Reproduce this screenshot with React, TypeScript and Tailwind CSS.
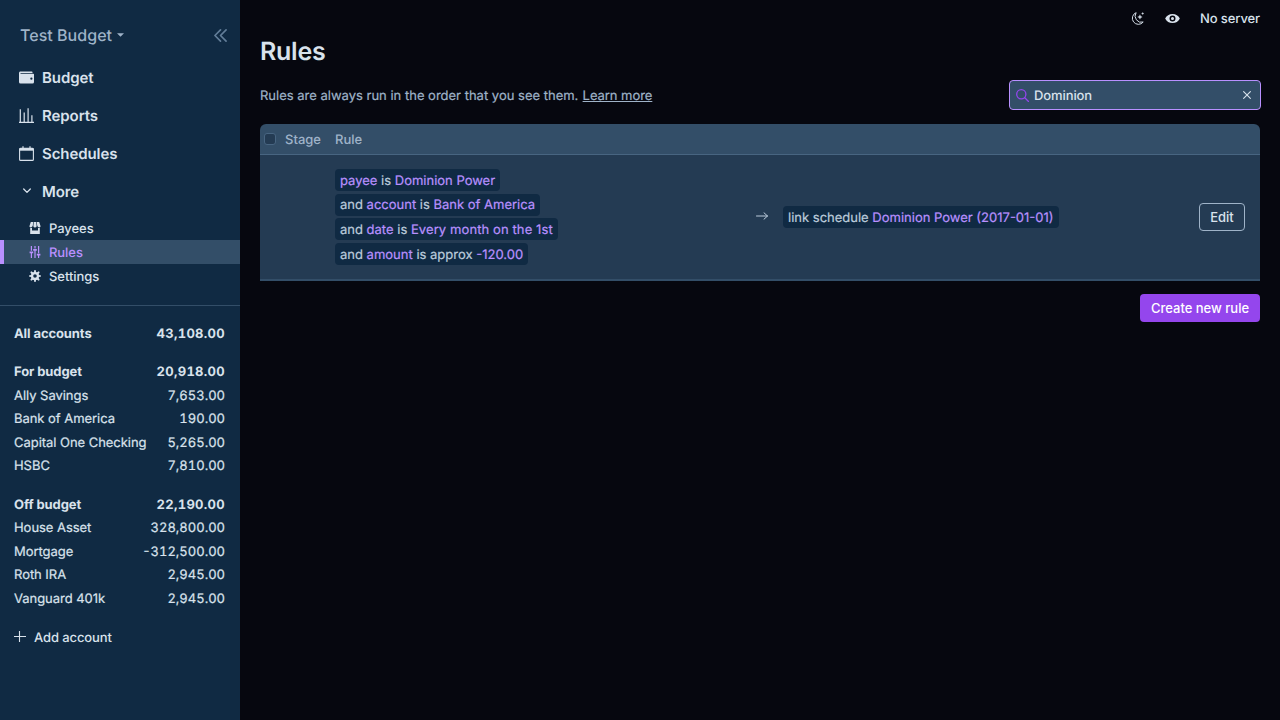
import type { ReactNode } from 'react';

const icons = {
  wallet:
    'M0 4c0-1.1.9-2 2-2h15a1 1 0 0 1 1 1v1H2v1h17a1 1 0 0 1 1 1v10a2 2 0 0 1-2 2H2a2 2 0 0 1-2-2V4zm16.5 9a1.5 1.5 0 1 0 0-3 1.5 1.5 0 0 0 0 3z',
  store:
    'M18 9.87V20H2V9.87a4.25 4.25 0 0 0 3-.38V14h10V9.5a4.26 4.26 0 0 0 3 .37zM3 0h4l-.67 6.03A3.43 3.43 0 0 1 3 9C1.34 9 .42 7.73.95 6.15L3 0zm5 0h4l.7 6.3c.17 1.5-.91 2.7-2.42 2.7h-.56A2.38 2.38 0 0 1 7.3 6.3L8 0zm5 0h4l2.05 6.15C19.58 7.73 18.65 9 17 9a3.42 3.42 0 0 1-3.33-2.97L13 0z',
  tuning:
    'M17 16v4h-2v-4h-2v-3h6v3h-2zM1 9h6v3H1V9zm6-4h6v3H7V5zM3 0h2v8H3V0zm12 0h2v12h-2V0zM9 0h2v4H9V0zM3 12h2v8H3v-8zm6-4h2v12H9V8z',
  cog: 'M3.94 6.5L2.22 3.64l1.42-1.42L6.5 3.94c.52-.3 1.1-.54 1.7-.7L9 0h2l.8 3.24c.6.16 1.18.4 1.7.7l2.86-1.72 1.42 1.42-1.72 2.86c.3.52.54 1.1.7 1.7L20 9v2l-3.24.8c-.16.6-.4 1.18-.7 1.7l1.72 2.86-1.42 1.42-2.86-1.72c-.52.3-1.1.54-1.7.7L11 20H9l-.8-3.24c-.6-.16-1.18-.4-1.7-.7l-2.86 1.72-1.42-1.42 1.72-2.86c-.3-.52-.54-1.1-.7-1.7L0 11V9l3.24-.8c.16-.6.4-1.18.7-1.7zM10 13a3 3 0 1 0 0-6 3 3 0 0 0 0 6z',
  eye: 'M.2 10a11 11 0 0 1 19.6 0A11 11 0 0 1 .2 10zm9.8 4a4 4 0 1 0 0-8 4 4 0 0 0 0 8zm0-2a2 2 0 1 1 0-4 2 2 0 0 1 0 4z',
};

function Glyph({ d, className }: { d: string; className: string }) {
  return (
    <svg viewBox="0 0 20 20" className={className} fill="currentColor">
      <path d={d} />
    </svg>
  );
}

function Primary({ icon, label }: { icon: ReactNode; label: string }) {
  return (
    <div className="flex h-[38px] items-center pl-[19px] text-[15px] font-semibold tracking-[-0.08px]">
      <span className="mr-2 flex w-[15px] justify-center">{icon}</span>
      <span className="pt-0.5">{label}</span>
    </div>
  );
}

function Secondary({ d, label, active }: { d: string; label: string; active?: boolean }) {
  return (
    <div
      className={
        active
          ? 'flex h-6 items-center border-l-4 border-[#b990ff] bg-[#334e68] pl-[25px] text-[13px] font-medium tracking-[-0.06px] text-[#b990ff]'
          : 'flex h-6 items-center pl-[29px] text-[13px] font-medium tracking-[-0.06px]'
      }
    >
      <Glyph d={d} className="mr-2 size-3" />
      <span className="pt-[3px]">{label}</span>
    </div>
  );
}

function Account({ name, value, bold }: { name: string; value: string; bold?: boolean }) {
  return (
    <div
      className={
        bold
          ? 'flex h-[23.5px] items-center justify-between pl-3.5 pr-[15px] pt-1 text-[13px] font-bold'
          : 'flex h-[23.5px] items-center justify-between pl-3.5 pr-[15px] pt-1 text-[13px] [-webkit-text-stroke:0.2px]'
      }
    >
      <span className={bold ? 'tracking-[-0.1px]' : 'tracking-[-0.04px]'}>{name}</span>
      <span className={bold ? 'tabular-nums tracking-[0.3px]' : 'tabular-nums'}>{value}</span>
    </div>
  );
}

function Chip({ children }: { children: ReactNode }) {
  return (
    <div className="flex h-[22px] items-center whitespace-pre rounded bg-[#102a43] px-[5px] pt-[3px] text-[13px] text-[#bcccdc] [-webkit-text-stroke:0.2px]">
      <span>{children}</span>
    </div>
  );
}

function Hi({ children }: { children: ReactNode }) {
  return <span className="text-[#b990ff]">{children}</span>;
}

function Sidebar() {
  return (
    <aside className="flex w-60 shrink-0 flex-col bg-[#102a43] text-[#d9e2ec]">
      <div className="flex h-[58px] items-center justify-between pb-0 pl-5 pr-[13px] pt-3">
        <div className="flex items-center gap-[5px] text-base font-medium tracking-[0.03px] text-[#9fb3c8]">
          Test Budget
          <svg viewBox="0 0 8 4" className="h-1 w-[7px]" fill="currentColor">
            <path d="M0 0h8L4 4z" />
          </svg>
        </div>
        <svg viewBox="0 0 14 14" className="size-[13px] text-[#627d98]" fill="none" stroke="currentColor" strokeWidth="1.8" strokeLinecap="round" strokeLinejoin="round">
          <path d="M7 1 1 7l6 6M13 1 7 7l6 6" />
        </svg>
      </div>
      <Primary icon={<Glyph d={icons.wallet} className="size-[15px]" />} label="Budget" />
      <Primary
        icon={
          <svg viewBox="0 0 15 15" className="size-[15px]" fill="none" stroke="currentColor" strokeWidth="1.2">
            <path d="M0 14.3h15M1.3 14V1.2M5.2 14V4.5M9.1 14V.3M12.9 14V7.3" />
          </svg>
        }
        label="Reports"
      />
      <Primary
        icon={
          <svg viewBox="0 0 15 15" className="size-[15px]" fill="none" stroke="currentColor">
            <rect x=".6" y="2.2" width="13.8" height="12.2" rx="1" strokeWidth="1.1" />
            <path d="M.5 3.4h14" strokeWidth="2.6" />
            <path d="M4 .2v3M11 .2v3" strokeWidth="1.2" />
          </svg>
        }
        label="Schedules"
      />
      <Primary
        icon={
          <svg viewBox="0 0 8 8" className="size-2" fill="none" stroke="currentColor" strokeWidth="1.3" strokeLinecap="round" strokeLinejoin="round">
            <path d="m.7 2 3.3 3.4L7.3 2" />
          </svg>
        }
        label="More"
      />
      <div className="mt-1.5 flex flex-col">
        <Secondary d={icons.store} label="Payees" />
        <Secondary d={icons.tuning} label="Rules" active />
        <Secondary d={icons.cog} label="Settings" />
      </div>
      <div className="mt-[17px] border-t border-[#334e68] pt-[15px]">
        <Account name="All accounts" value="43,108.00" bold />
        <div className="mt-[14.5px]">
          <Account name="For budget" value="20,918.00" bold />
          <Account name="Ally Savings" value="7,653.00" />
          <Account name="Bank of America" value="190.00" />
          <Account name="Capital One Checking" value="5,265.00" />
          <Account name="HSBC" value="7,810.00" />
        </div>
        <div className="mt-[15px]">
          <Account name="Off budget" value="22,190.00" bold />
          <Account name="House Asset" value="328,800.00" />
          <Account name="Mortgage" value="-312,500.00" />
          <Account name="Roth IRA" value="2,945.00" />
          <Account name="Vanguard 401k" value="2,945.00" />
        </div>
        <div className="mt-4 flex h-[23px] items-center gap-2 pl-3.5 text-[13px] font-medium tracking-[-0.1px]">
          <svg viewBox="0 0 12 12" className="size-3" fill="none" stroke="currentColor" strokeWidth="1.1">
            <path d="M0 5.5h12M5.5 0v11" />
          </svg>
          <span className="pt-1">Add account</span>
        </div>
      </div>
    </aside>
  );
}

export default function App() {
  return (
    <div className="flex h-[720px] w-[1280px] overflow-hidden bg-[#06070f] font-[Inter,sans-serif] text-[13px] [text-rendering:geometricPrecision]">
      <Sidebar />
      <main className="flex flex-1 flex-col px-5 text-[#d9e2ec]">
        <div className="flex h-9 items-center justify-end font-medium tracking-[-0.1px]">
          <svg viewBox="0 0 24 24" className="mr-[21px] size-[13px]" fill="none" stroke="currentColor" strokeWidth="1.8" strokeLinejoin="round">
            <path d="M9.5 1.2A11.2 11.2 0 1 0 22.5 18.5A11.5 11.5 0 0 1 9.5 1.2Z" />
            <path d="m16.5 5 1.2 3 3 1.2-3 1.2-1.2 3-1.2-3-3-1.2 3-1.2z" fill="currentColor" strokeWidth=".5" />
            <path d="M21.5.8v4M19.5 2.8h4" strokeWidth="1.5" />
          </svg>
          <Glyph d={icons.eye} className="mr-5 size-[15px]" />
          <span className="pt-[3px]">No server</span>
        </div>
        <h1 className="flex h-[30px] items-center pt-[3px] text-[25px] font-semibold tracking-[-0.25px]">Rules</h1>
        <div className="mt-3.5 flex h-[30px] items-center justify-between">
          <div className="pt-[3px] text-[#9fb3c8] [-webkit-text-stroke:0.2px]">
            Rules are always run in the order that you see them.{' '}
            <span className="ml-[0.6px] tracking-[-0.05px] underline">Learn more</span>
          </div>
          <div className="-mr-px flex h-[30px] w-[252px] items-center rounded border border-[#b990ff] bg-[#334e68] pl-1.5 pr-[9px] font-medium tracking-[-0.1px]">
            <svg viewBox="0 0 13 13" className="mr-[5px] size-[13px] text-[#9446ed]" fill="none" stroke="currentColor" strokeWidth="1.3" strokeLinecap="round">
              <circle cx="5.3" cy="5.3" r="4.6" />
              <path d="m8.8 8.8 3.7 3.7" />
            </svg>
            <span className="flex-1 pt-[3px]">Dominion</span>
            <svg viewBox="0 0 8 8" className="size-2" fill="none" stroke="currentColor" strokeWidth="1.1">
              <path d="m.3.3 7.4 7.4M7.7.3.3 7.7" />
            </svg>
          </div>
        </div>
        <div className="mt-3.5 overflow-hidden rounded-t-md">
          <div className="flex h-[31px] items-center border-b border-[#486581] bg-[#334e68] pl-1 font-medium text-[#9fb3c8]">
            <span className="mb-px size-3 rounded-[3px] border border-[#486581] bg-[#243b53]" />
            <span className="ml-[9px] w-[50px] pt-[3px]">Stage</span>
            <span className="pt-[3px]">Rule</span>
          </div>
          <div className="flex h-[126px] items-center border-b-2 border-[#334e68] bg-[#243b53] pl-[75px] pr-[15px]">
            <div className="flex w-[421px] flex-col items-start gap-[2.6px]">
              <Chip><Hi>payee</Hi> is <Hi>Dominion Power</Hi></Chip>
              <Chip>and <Hi>account</Hi> is <Hi>Bank of America</Hi></Chip>
              <Chip>and <Hi>date</Hi> is <Hi><span className="tracking-[0.1px]">Every month on the 1st</span></Hi></Chip>
              <Chip>and <Hi>amount</Hi> is approx <Hi>-120.00</Hi></Chip>
            </div>
            <svg viewBox="0 0 12 8" className="mb-0.5 mr-[15px] h-2 w-3 text-[#bcccdc]" fill="none" stroke="currentColor" strokeLinecap="round" strokeLinejoin="round">
              <path d="M.5 4h11M8 .8 11.5 4 8 7.2" />
            </svg>
            <Chip>link schedule <Hi>Dominion Power (2017-01-01)</Hi></Chip>
            <button className="ml-auto h-7 w-[46px] rounded border border-[#9fb3c8] pt-px font-medium">Edit</button>
          </div>
        </div>
        <button className="mt-[13px] h-7 w-[120px] self-end rounded bg-[#9446ed] pt-px font-medium text-white">Create new rule</button>
      </main>
    </div>
  );
}
